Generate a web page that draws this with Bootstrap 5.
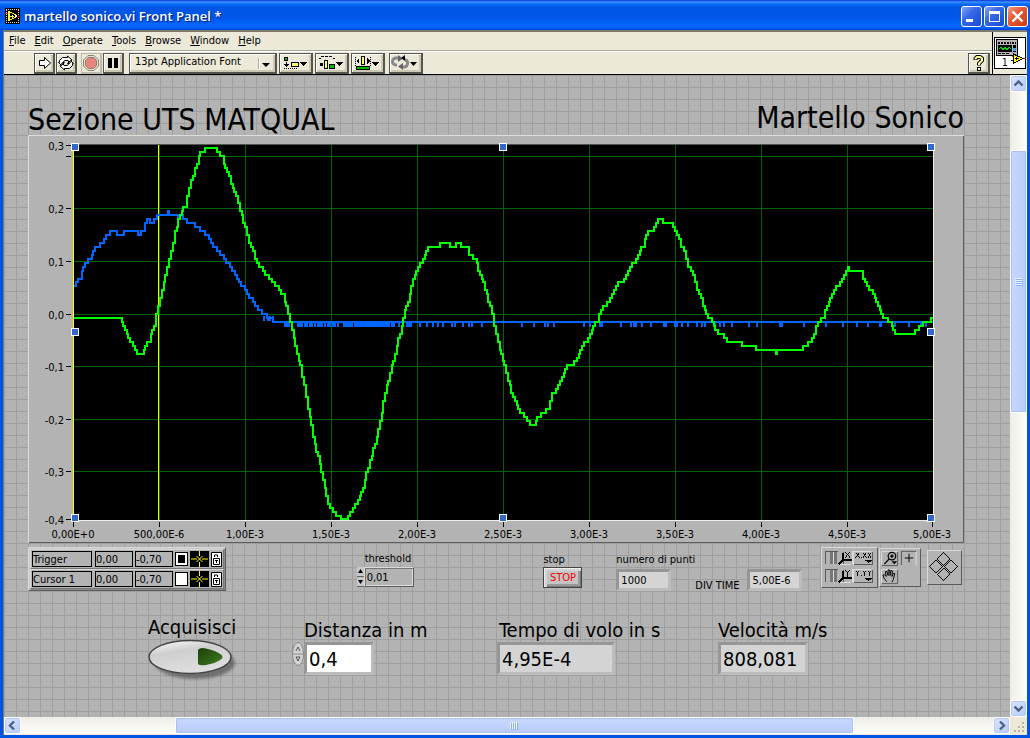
<!DOCTYPE html>
<html lang="it">
<head>
<meta charset="utf-8">
<meta name="viewport" content="width=device-width, initial-scale=1">
<title>martello sonico.vi Front Panel *</title>
<link href="https://cdn.jsdelivr.net/npm/bootstrap@5.3.0/dist/css/bootstrap.min.css" rel="stylesheet">
<style>
  :root { --panel: #b3b3b3; --face: #ece9d8; --blue: #0054e3; }
  body { font-family: "DejaVu Sans Condensed", "DejaVu Sans", sans-serif; font-size: 11px; line-height: 14px; color: #000; background: #0831d9; }
  input, button, select { font: inherit; color: inherit; border-radius: 0; }
  svg { display: block; flex: none; }
  .app-window { min-height: 100vh; padding: 0 3px; padding-bottom: 3px; background: var(--blue); }

  .title-strip { height: 30px; margin: 0 -3px; padding: 2px 0 0 5px; background: linear-gradient(#0831d9 0, #3a93ff 2px, #0a6af5 4px, #0055e5 8px, #0057e8 18px, #0066ff 25px, #0061f5 28px, #003dd7 30px); }
  .title-text { font: 600 13px/18px "Open Sans", sans-serif; color: #fff; text-shadow: 1px 1px 1px #0a1883; }
  .win-btn { width: 21px; height: 21px; padding: 0; border: 1px solid #fff; border-radius: 3px; background: linear-gradient(135deg, #86a6f0, #3668e6 40%, #1c4bd0); }
  .win-btn.close-btn { background: linear-gradient(135deg, #f0a088, #e35a36 40%, #c93a12); }

  .work { border: 1px solid #7c7a6c; border-width: 2px 0 0 1px; background: var(--face); }
  .menu-strip { height: 19px; gap: 9px; padding: 0 5px; border-bottom: 1px solid #aca899; }
  .menu-strip a { color: #000; text-decoration: none; line-height: 18px; }
  .tool-strip { height: 23px; padding: 1px 2px 0 30px; border-top: 1px solid #fff; }
  .tool-btn { height: 21px; width: 21px; padding: 0; border: 1px solid #55554d; border-right-width: 2px; border-bottom-width: 2px; background: var(--face); box-shadow: inset 1px 1px #fff, inset -2px -2px #cbc8b4; }
  .tool-btn.wide { width: 34px; }
  .tool-btn.off { border-color: #bdb9a8; box-shadow: none; }
  .font-wrap { width: 148px; }
  .font-wrap select { width: 100%; height: 21px; padding: 0 22px 2px 5px; appearance: none; border: 1px solid #55554d; border-width: 1px 2px 2px 1px; background: var(--face); box-shadow: inset 1px 1px #fff, inset -2px -2px #cbc8b4; }
  .font-wrap svg { position: absolute; right: 3px; top: 2px; pointer-events: none; }
  .vi-box { width: 35px; padding: 5px 0 0 1px; border-left: 1px solid #000; }
  .head-row { border-bottom: 1px solid #000; }

  .canvas-area { padding: 0 46px 0 24px; background: repeating-linear-gradient(90deg, #9f9f9f 0 1px, transparent 1px 12px), repeating-linear-gradient(#9f9f9f 0 1px, transparent 1px 12px), var(--panel); min-width: 0; }
  .big-title { font-size: 30px; line-height: 34px; padding-top: 26px; margin: 0; font-weight: 400; }
  h1.big-title { line-height: 30px; padding-top: 30px; }
  .chart-frame text { font-size: 11px; }

  .mid-row { display: grid; grid-template-columns: 329fr 187fr 73fr 78fr 126fr 143fr; margin-top: 4px; height: 44px; }
  .low-row { display: grid; grid-template-columns: 144fr 205fr 221fr 246fr; margin-top: 27px; padding-left: 120px; }
  .low-row label, .low-label { font-size: 20px; line-height: 24px; white-space: nowrap; }
  .raised { background: var(--panel); border: 1px solid; border-color: #d9d9d9 #5c5c5c #5c5c5c #d9d9d9; }
  .cursor-set { width: 198px; padding: 1px; box-shadow: inset 1px 1px #c8c8c8, inset -1px -1px #8a8a8a; }
  .cursor-line { height: 20px; gap: 2px; padding: 0 1px; border: 1px solid; border-color: #d9d9d9 #777 #777 #d9d9d9; }
  .cursor-line input { flex: none; }
  .cursor-line input[type=text] { height: 16px; width: 38px; padding: 0; border: 1px solid #000; background: var(--panel); }
  .cursor-line input[type=text].cur-name { width: 60px; margin-right: 1px; }
  .cursor-line input[type=checkbox] { appearance: none; width: 13px; height: 14px; margin: 0; border: 1px solid #000; background: #fff; }
  .cursor-line input[type=checkbox]:checked { background: #000; box-shadow: inset 0 0 0 2px #fff; }
  .field-thr { width: 50px; height: 20px; padding: 0 2px; border: 1px solid; border-color: #d9d9d9 #5c5c5c #5c5c5c #d9d9d9; background: var(--panel); box-shadow: inset 1px 1px #777, inset -1px -1px #ddd; }
  .stop-btn { width: 39px; height: 21px; padding: 0; color: #f00; border: 1px solid #444; background: #c4c4c4; box-shadow: inset 1px 1px #eee, inset 3px 3px #d4d4d4, inset -1px -1px #777, inset -3px -3px #999; }
  .sunk { border: 3px solid; border-color: #969696 #bcbcbc #bcbcbc #969696; background: #d4d4d4; padding: 0 2px; min-width: 0; }
  .sunk.small-f { width: 55px; height: 22px; }
  .sunk.large-f { height: 33px; font-size: 20px; }
  .sunk.editable { background: #fff; }
  .acq-btn { padding: 0; border: 0; background: none; }

  .v-bar { width: 17px; background: linear-gradient(90deg, #eeede5, #fefefb); }
  .h-bar { height: 17px; background: linear-gradient(#eeede5, #fefefb); }
  .sb-btn { width: 17px; height: 17px; padding: 0; flex: none; border: 1px solid #fff; border-radius: 3px; background: linear-gradient(135deg, #dce7ff, #b5cbfa); box-shadow: inset 0 0 0 1px #b4c8f3; }
  .sb-thumb { border: 1px solid #fff; border-radius: 2px; box-shadow: inset 0 0 0 1px #aac0f0; }
  .v-bar .sb-thumb { background: linear-gradient(90deg, #c9d8fd, #b8cdfb); }
  .h-bar .sb-thumb { background: linear-gradient(#c9d8fd, #b8cdfb); }
</style>
</head>
<body>
<div class="app-window d-flex flex-column">
  <header class="title-strip d-flex align-items-center">
    <svg width="15" height="16" viewBox="0 0 15 16" shape-rendering="crispEdges"><path d="M0 0h15v16H0z" fill="#000"/><path d="M1 1.500h13M1 14.500h13M1.500 2v12M13.500 2v12" stroke="#ddd" stroke-dasharray="1 1"/><path d="M3 3v10h2v-1h2v-1h2v-1h2V9h1V7h-1V6H9V5H7V4H5V3z" fill="#ffff50"/><path d="M5 5h2v1h2v1h1v2H9v1H7v1H5z"/><path d="M5 8.500h4M7.500 7v3" stroke="#ffff50"/><path d="M0 5.500h3M13 8.500h2" stroke="red"/></svg>
    <span class="title-text flex-grow-1 ms-1">martello sonico.vi Front Panel *</span>
    <div class="d-flex" style="gap:2px;padding-right:2px">
      <button class="win-btn" aria-label="Minimize"><svg width="19" height="19"><path d="M4 12h7v3H4z" fill="#fff"/></svg></button>
      <button class="win-btn" aria-label="Maximize"><svg width="19" height="19"><path d="M4 4h11v11H4zM5 7v7h9V7z" fill="#fff" fill-rule="evenodd"/></svg></button>
      <button class="win-btn close-btn" aria-label="Close"><svg width="19" height="19"><path d="M4.500 4.500l10 10m0-10l-10 10" stroke="#fff" stroke-width="2.400"/></svg></button>
    </div>
  </header>

  <div class="work d-flex flex-column flex-grow-1">
    <div class="head-row d-flex">
      <div class="flex-grow-1">
        <nav class="menu-strip d-flex">
          <a href="#"><u>F</u>ile</a><a href="#"><u>E</u>dit</a><a href="#"><u>O</u>perate</a><a href="#"><u>T</u>ools</a><a href="#"><u>B</u>rowse</a><a href="#"><u>W</u>indow</a><a href="#"><u>H</u>elp</a>
        </nav>
        <div class="tool-strip d-flex">
          <button class="tool-btn" aria-label="Run"><svg width="18" height="18"><path d="M4.500 6.500h5v-3l6 5.500-6 5.500v-3h-5z" fill="#fff" stroke="#000"/></svg></button>
          <button class="tool-btn" style="margin-left:1px" aria-label="Run continuously"><svg width="18" height="18"><path d="M2.500 6.500l3-3h5V2l4.500 4-2.500 3.500L11 6.500H7.500L6 8.500h1.500l-3 3-3-3h1zM15.500 11.500l-3 3h-5V16L3 12l2.500-3.500L7 11.500h3.500L12 9.500h-1.500l3-3 3 3h-1z" fill="#fff" stroke="#000"/></svg></button>
          <button class="tool-btn off ms-1" aria-label="Abort"><svg width="18" height="18"><path d="M6 1.500h6L16.500 6v6L12 16.500H6L1.500 12V6z" fill="#e4e0d0" stroke="#858278"/><path d="M6.500 3.500h5l3 3v5l-3 3h-5l-3-3v-5z" fill="#e6857c" stroke="#98766e"/></svg></button>
          <button class="tool-btn" style="margin-left:1px" aria-label="Pause"><svg width="18" height="18"><path d="M4 4h4v10H4zM10 4h4v10h-4z"/></svg></button>
          <div class="font-wrap position-relative" style="margin-left:5px">
            <select aria-label="Font"><option>13pt Application Font</option></select>
            <svg width="16" height="17"><path d="M.5 3v11" stroke="#aaa"/><path d="M1.500 3v11" stroke="#fff"/><path d="M4 8h8l-4 4z"/></svg>
          </div>
          <button class="tool-btn wide" style="margin-left:2px" aria-label="Align objects"><svg width="31" height="18" shape-rendering="crispEdges"><path d="M4.500 3.500h3v3h-3z" fill="#0b0" stroke="#000"/><path d="M6 8v2" stroke="#000"/><path d="M4 10h5l-2.500 3z"/><path d="M4 14.500h14" stroke="#000" stroke-dasharray="1 1"/><path d="M11.500 8.500h7v4h-7z" fill="#ffff60" stroke="#000"/><path d="M20 8h7l-3.500 4z"/></svg></button>
          <button class="tool-btn wide" style="margin-left:2px" aria-label="Distribute objects"><svg width="31" height="18" shape-rendering="crispEdges"><path d="M3 4.500h2M5 2.500h12M17 4.500h2" fill="none" stroke="#000" stroke-dasharray="3 1"/><path d="M4 9h3v3H4z"/><path d="M8.500 6.500h3v8h-3z" fill="#ffff60" stroke="#000"/><path d="M13.500 10.500h5v4h-5z" fill="#0b0" stroke="#000"/><path d="M20 8h7l-3.500 4z"/></svg></button>
          <button class="tool-btn wide" style="margin-left:2px" aria-label="Resize objects"><svg width="31" height="18" shape-rendering="crispEdges"><path d="M3.500 3v9M18.500 3v9" stroke="#000" stroke-dasharray="1 1"/><path d="M4 7l3-3v6zM18 7l-3-3v6z"/><path d="M9.500 2.500h3v8h-3z" fill="#ffff60" stroke="#000"/><path d="M4.500 12.500h13v3h-13z" fill="#0b0" stroke="#000"/><path d="M20 8h7l-3.500 4z"/></svg></button>
          <button class="tool-btn wide" style="margin-left:4px" aria-label="Reorder"><svg width="31" height="18"><path d="M9 4H6a3 3 0 0 0 0 7h1M13 13h2a4 4 0 0 0 1-7h-1" fill="none" stroke="#888" stroke-width="3"/><path d="M8 1l5 3.500L8 8zM13 9l-5 3.500 5 3.500z" fill="#666"/><path d="M15 1l-4 3 4 3z"/><path d="M20 8h7l-3.500 4z"/></svg></button>
          <button class="tool-btn ms-auto" style="width:22px" aria-label="Help"><svg width="19" height="18"><path d="M6.500 6V4.500L8 3h3l2 1.500v2L10 9.500v2" fill="none" stroke="#000" stroke-width="4"/><path d="M8 13h4v4H8z"/><path d="M6.500 5.500v-1L8 3h3l2 1.500v2L10 9.500V11" fill="none" stroke="#ffff9a" stroke-width="2"/><path d="M9 14h2v2H9z" fill="#ffff9a"/></svg></button>
        </div>
      </div>
      <div class="vi-box"><svg width="32" height="32" viewBox="0 0 32 32" shape-rendering="crispEdges"><path d="M.5.500h31v31H.5z" fill="#fff" stroke="#000"/><path d="M2.500 2.500h21v16h-21z" fill="#b5b5b5" stroke="#000"/><path d="M4 6h13M18 6h4" stroke="#000" stroke-width="2" stroke-dasharray="2 1"/><path d="M4 8h14v7H4zM19 8h3v7h-3z"/><path d="M5 12l2-2 2 3 2-3 2 3 2-3 2 2" fill="none" stroke="#0d0"/><path d="M19 11h3v3h-3z" fill="#49f"/><path d="M4 16.500h12" stroke="#000" stroke-dasharray="3 1"/><path d="M17 23.500h3" stroke="#00f"/><path d="M18 19.500h3M28 21.500h4" stroke="red"/><path d="M19 16v11l11-5.500z"/><path d="M20 18v7.500l8-4z" fill="#ffff20"/><path d="M21 21.500h4M22.500 20v3" stroke="#000"/><text x="8" y="29" font-size="10">1</text></svg></div>
    </div>

    <div class="d-flex flex-grow-1">
      <main class="canvas-area flex-grow-1">
        <div class="d-flex justify-content-between">
          <h1 class="big-title">Sezione UTS MATQUAL</h1>
          <h2 class="big-title">Martello Sonico</h2>
        </div>

        <svg class="chart-frame w-100" viewBox="28 135 936 408" role="img" aria-label="Grafico del segnale">
          <path d="M28 135h936v408H28z" fill="#b3b3b3"/>
          <path d="M28.500 543V135.500H964" fill="none" stroke="#dcdcdc"/>
          <path d="M963.500 136v406.500H29" fill="none" stroke="#5c5c5c"/>
          <path d="M73 144h860v376H73z"/>
          <path d="M73 144.500h860" stroke="#555"/>
          <path d="M933.500 145v375.500H74" fill="none" stroke="#ececec"/>
          <g id="gridLines" stroke="#006400"></g>
          <g id="axisMarks"></g>
          <path d="M73.500 145v375M158.500 145v375" stroke="#ff0"/>
          <path id="blueTrace" fill="none" stroke="#06f" stroke-width="2"/>
          <path id="blueDips" fill="none" stroke="#06f" stroke-width="2"/>
          <path id="greenTrace" fill="none" stroke="#0f0" stroke-width="2"/>
          <g id="handles" fill="#316ac5" stroke="#fff"></g>
        </svg>

        <div class="mid-row">
          <div>
            <div class="raised cursor-set">
              <div class="cursor-line d-flex align-items-center">
                <input type="text" class="cur-name" aria-label="Cursor name" value="Trigger"><input type="text" aria-label="X" value="0,00"><input type="text" aria-label="Y" value="-0,70"><input type="checkbox" aria-label="Active" checked>
                <svg width="19" height="16"><path d="M0 0h19v16H0z"/><path d="M1 8h6m5 0h6M9.500 0v5m0 6v5M6.500 5l6 6m0-6l-6 6" stroke="#ff0"/></svg>
                <svg width="11" height="15"><path d="M.5.500h10v14H.5z" fill="#fff" stroke="#000"/><path d="M3.500 5V3h3v2M2.500 6.500h6v6h-6zM4 8.500h3M5.500 8v3" fill="none" stroke="#000"/></svg>
              </div>
              <div class="cursor-line d-flex align-items-center">
                <input type="text" class="cur-name" aria-label="Cursor name" value="Cursor 1"><input type="text" aria-label="X" value="0,00"><input type="text" aria-label="Y" value="-0,70"><input type="checkbox" aria-label="Active">
                <svg width="19" height="16"><path d="M0 0h19v16H0z"/><path d="M1 8h6m5 0h6M9.500 0v5m0 6v5M6.500 5l6 6m0-6l-6 6" stroke="#ff0"/></svg>
                <svg width="11" height="15"><path d="M.5.500h10v14H.5z" fill="#fff" stroke="#000"/><path d="M3.500 5V3h3v2M2.500 6.500h6v6h-6zM4 8.500h3M5.500 8v3" fill="none" stroke="#000"/></svg>
              </div>
            </div>
          </div>
          <div style="padding-top:5px">
            <label for="thr" class="d-block ms-2">threshold</label>
            <div class="d-flex" style="margin-top:1px">
              <svg width="7" height="20"><path d="M0 0h7v9.500H0zM0 10.500h7V20H0z" fill="#c8c8c8"/><path d="M0 9.500h7M0 19.500h7" stroke="#666"/><path d="M1 6l2.500-4L6 6zM1 13l2.500 4L6 13z"/></svg>
              <input id="thr" type="text" class="field-thr" value="0,01">
            </div>
          </div>
          <div style="padding-top:6px">
            <label for="stp" class="d-block">stop</label>
            <button id="stp" class="stop-btn">STOP</button>
          </div>
          <div style="padding-top:6px">
            <label for="pts" class="d-block text-nowrap">numero di punti</label>
            <input id="pts" type="text" readonly class="sunk small-f d-block" style="margin-top:2px" value="1000">
          </div>
          <div class="d-flex" style="padding-top:22px;gap:8px">
            <label for="dvt" class="text-nowrap" style="padding-top:10px">DIV TIME</label>
            <input id="dvt" type="text" readonly class="sunk small-f" value="5,00E-6">
          </div>
          <div class="d-flex align-items-start">
            <svg width="57" height="41" class="raised" viewBox="0 0 57 41" shape-rendering="crispEdges">
              <g id="scaleRow"><path d="M3.500 17V3.500h13M22.500 4v13.500" fill="none" stroke="#555"/><path d="M8 4h3v13H8zM12 4h3v13h-3z" fill="#777"/><path d="M11.500 4v13" stroke="#ddd"/><path d="M30.500 17.500H17M31.500 3v14M33 17.500V3.500h18" fill="none" stroke="#ddd"/><path d="M52.500 4v13.500H33" fill="none" stroke="#555"/><path d="M21.500 5v8h10M21 13l-4 4" stroke="#000" fill="none" stroke-width="2"/><path d="M45 13h7l-3.500 3z"/></g>
              <use href="#scaleRow" y="19"/>
              <path d="M24 4l5 6m0-6l-5 6M35 5l4 5m0-5l-4 5M43 5l3 5m0-5l-3 5M48 5l3 5m0-5l-3 5M41 9.500h1M24 23l2.500 3 2.500-3M26.500 26v4M35 24l2 2 2-2M37 26v3M43 24l1.500 2 1.500-2M44.500 26v3M48 24l1.500 2 1.500-2M49.500 26v3M41 28.500h1" fill="none" stroke="#000"/>
            </svg>
            <svg width="42" height="39" class="raised" viewBox="0 0 42 39" style="margin:1px 0 0 1px">
              <path d="M1.500 17V2.500h17M1.500 36V21.500h17M38 17.500V3" fill="none" stroke="#ddd"/><path d="M18.500 3v14.500H2M18.500 22v14.500H2M22.500 17V2.500H38" fill="none" stroke="#555"/>
              <circle cx="12.500" cy="7.500" r="4" fill="none" stroke="#000" stroke-width="1.300"/><path d="M10.500 7.500h4m-2-2v4M9.500 10.500l-5 5.500" stroke="#000" stroke-width="1.300"/><path d="M12 13h6l-3 3z"/>
              <path d="M30.500 5v9M26 9.500h9" stroke="#000"/>
              <path d="M7 34.500l-3-4-1-3 1.500-.5 2 2-1-5 1.500-.5 1.500 4.500v-6h1.500l.5 6 1-5.500 1.500.5-.5 6 1.500-3.500 1.500.5-1.500 6-1.500 3" fill="none" stroke="#000"/>
            </svg>
            <svg width="35" height="35" class="raised" viewBox="0 0 35 35" style="margin:3px 0 0 6px" shape-rendering="crispEdges"><path d="M16.500 1.500l7 7-7 7-7-7zM8.500 9.500l7 7-7 7-7-7zM24.500 9.500l7 7-7 7-7-7zM16.500 17.500l7 7-7 7-7-7z" fill="none" stroke="#000"/></svg>
          </div>
        </div>

        <div class="low-row">
          <div style="margin-top:-3px">
            <span class="low-label d-block" id="acqLabel">Acquisisci</span>
            <button class="acq-btn" aria-labelledby="acqLabel">
              <svg width="90" height="44" viewBox="0 0 90 44">
                <defs>
                  <linearGradient id="btnFace" x1="0" y1="0" x2=".4" y2="1"><stop offset="0" stop-color="#fff"/><stop offset=".4" stop-color="#cfcfcf"/><stop offset="1" stop-color="#dedede"/></linearGradient>
                  <linearGradient id="ledFace" x1="0" y1="0" x2="1" y2="1"><stop offset="0" stop-color="#1c3f08"/><stop offset="1" stop-color="#3f7d22"/></linearGradient>
                  <filter id="softShade"><feGaussianBlur stdDeviation="1.500"/></filter>
                </defs>
                <ellipse cx="47" cy="24" rx="40" ry="16" fill="#555" opacity=".7" filter="url(#softShade)"/>
                <ellipse cx="42" cy="18" rx="41" ry="16.500" fill="url(#btnFace)" stroke="#444" stroke-width="1.500"/>
                <path d="M50 11q2-3 8-1.500q10 2 15 6q3 2.500 0 5q-6 4-15 5.500q-6 1-8-1z" fill="url(#ledFace)"/>
              </svg>
            </button>
          </div>
          <div>
            <label for="dist" class="d-block" style="margin-left:12px">Distanza in m</label>
            <div class="d-flex">
              <svg width="12" height="24" viewBox="0 0 12 24"><ellipse cx="6" cy="12" rx="5.500" ry="11.500" fill="#d2d2d2" stroke="#888"/><path d="M1 12h10" stroke="#888"/><path d="M4 9l2-4 2 4M4 15l2 4 2-4z" fill="none" stroke="#555"/></svg>
              <input id="dist" type="text" class="sunk large-f editable" style="width:70px" value="0,4">
            </div>
          </div>
          <div>
            <label for="tof" class="d-block" style="margin-left:2px">Tempo di volo in s</label>
            <input id="tof" type="text" readonly class="sunk large-f d-block" style="width:118px" value="4,95E-4">
          </div>
          <div>
            <label for="vel" class="d-block">Velocità m/s</label>
            <input id="vel" type="text" readonly class="sunk large-f d-block" style="width:90px" value="808,081">
          </div>
        </div>
      </main>
      <div class="v-bar d-flex flex-column">
        <button class="sb-btn" aria-label="Scroll up"><svg width="15" height="15"><path d="M3.500 9.500l4-4 4 4" fill="none" stroke="#4d6185" stroke-width="2.400"/></svg></button>
        <div style="flex:58"></div>
        <div class="sb-thumb d-flex align-items-center justify-content-center" style="flex:263"><svg width="8" height="8"><path d="M0 .5h7M0 2.500h7M0 4.500h7M0 6.500h7" stroke="#eef4fe"/><path d="M1 1.500h7M1 3.500h7M1 5.500h7M1 7.500h7" stroke="#8cb0f8"/></svg></div>
        <div style="flex:288"></div>
        <button class="sb-btn" aria-label="Scroll down"><svg width="15" height="15"><path d="M3.500 5.500l4 4 4-4" fill="none" stroke="#4d6185" stroke-width="2.400"/></svg></button>
      </div>
    </div>
    <div class="d-flex">
      <div class="h-bar d-flex flex-grow-1">
        <button class="sb-btn" aria-label="Scroll left"><svg width="15" height="15"><path d="M9 3.500l-4 4 4 4" fill="none" stroke="#4d6185" stroke-width="2.400"/></svg></button>
        <div style="flex:154"></div>
        <div class="sb-thumb d-flex align-items-center justify-content-center" style="flex:679"><svg width="8" height="8"><path d="M.5 0v7M2.500 0v7M4.500 0v7M6.500 0v7" stroke="#eef4fe"/><path d="M1.500 1v7M3.500 1v7M5.500 1v7M7.500 1v7" stroke="#8cb0f8"/></svg></div>
        <div style="flex:139"></div>
        <button class="sb-btn" aria-label="Scroll right"><svg width="15" height="15"><path d="M6 3.500l4 4-4 4" fill="none" stroke="#4d6185" stroke-width="2.400"/></svg></button>
      </div>
      <svg width="17" height="17"><path d="M12 5h2v2h-2zM8 9h2v2H8zM12 9h2v2h-2zM4 13h2v2H4zM8 13h2v2H8zM12 13h2v2h-2z" fill="#b8b4a2"/></svg>
    </div>
    <div style="height:1px"></div>
  </div>
</div>

<script src="https://cdn.jsdelivr.net/npm/bootstrap@5.3.0/dist/js/bootstrap.bundle.min.js"></script>
<script>
  // Signals, as x,y pairs in plot units
  const green = [74,318,120,318,125,328,130,340,135,349,139,355,142,354,145,346,149,340,154,325,158,306,162,291,167,268,171,252,175,233,180,215,185,206,189,188,193,174,197,162,200,154,205,150,211,147,214,147,217,152,222,158,227,170,231,184,236,196,240,211,243,222,247,236,253,252,257,262,265,275,272,281,277,288,283,295,288,313,292,328,297,353,300,366,304,386,308,408,313,435,318,458,323,481,328,503,333,511,338,515,343,519,346,519,350,513,353,507,358,500,363,487,368,467,375,443,380,420,385,393,390,375,395,352,400,333,403,317,408,302,413,278,418,267,423,260,428,248,439,248,440,244,449,244,450,248,455,248,456,244,460,244,461,248,467,248,469,255,475,260,480,273,485,290,490,307,494,325,498,343,501,355,506,372,508,380,513,397,520,412,527,420,530,424,534,424,537,417,543,413,548,407,552,395,560,382,567,367,572,365,577,357,582,347,588,337,597,320,603,307,610,298,616,285,622,283,630,265,636,260,643,245,648,232,652,230,658,219,661,219,663,223,671,223,675,230,681,245,684,250,688,265,693,275,697,292,701,297,703,308,708,317,712,320,715,328,720,334,724,337,729,342,740,343,743,346,755,346,756,350,775,350,776,355,777,350,799,350,805,346,810,340,814,332,818,323,823,317,827,307,832,293,838,286,844,273,848,268,849,272,854,269,855,272,861,272,867,287,873,293,878,307,883,317,888,320,895,333,912,334,917,328,923,323,928,321,933,318];
  const blue = [74,285,80,277,85,262,90,259,95,248,102,242,110,231,116,231,117,235,122,235,124,231,137,231,138,235,143,230,147,220,152,222,157,215,167,215,168,212,169,215,173,215,178,218,181,216,185,221,191,223,200,230,207,235,213,245,222,255,230,267,237,277,245,292,253,302,262,313,267,317,275,322,283,322,933,322];
  const dips = [264,268,270,273,285,287,289,292,298,300,302,305,307,310,312,315,318,320,322,325,328,330,333,335,338,344,346,348,350,352,355,357,359,361,363,365,367,369,371,373,375,377,379,381,383,385,387,389,392,394,399,407,409,411,420,427,433,438,443,452,455,463,469,472,482,522,534,545,548,554,584,590,600,602,621,631,634,636,642,651,664,666,675,677,682,688,697,702,705,715,720,724,732,749,757,780,782,804,826,843,857,868,880,881,895,909,921,926];

  // The converter has discrete levels, so a trace climbs in steps
  function stepped(pts, step) {
    const level = y => Math.round(318 + Math.round((y - 318) / step) * step);
    let d = `M${pts[0]} ${level(pts[1])}`;
    for (let i = 2; i < pts.length; i += 2) {
      const x0 = pts[i - 2], y0 = pts[i - 1], x1 = pts[i], y1 = pts[i + 1];
      const n = Math.max(1, Math.round((x1 - x0) / 2));
      for (let k = 1; k <= n; k++) d += `H${Math.round(x0 + (x1 - x0) * k / n)}V${level(y0 + (y1 - y0) * k / n)}`;
    }
    return d;
  }
  const byId = id => document.getElementById(id);
  byId('greenTrace').setAttribute('d', stepped(green, 3.95));
  byId('blueTrace').setAttribute('d', stepped(blue, 3.95));
  byId('blueDips').setAttribute('d', dips.map(x => `M${x} ${x < 275 ? 316 : 322}v5`).join(''));

  const rows = [[208, '0,2'], [261, '0,1'], [314, '0,0'], [366, '-0,1'], [419, '-0,2'], [471, '-0,3']];
  const cols = ['0,00E+0', '500,00E-6', '1,00E-3', '1,50E-3', '2,00E-3', '2,50E-3', '3,00E-3', '3,50E-3', '4,00E-3', '4,50E-3', '5,00E-3'];
  let grid = '', marks = '';
  [156, ...rows.map(r => r[0])].forEach(y => grid += `<path d="M74 ${y}.5h859"/>`);
  [[145, '0,3'], [156, ''], ...rows, [519, '-0,4']].forEach(([y, t]) => {
    marks += `<path d="M66 ${y}.5h5" stroke="#000"/><text x="64" y="${y + 5}" text-anchor="end">${t}</text>`;
  });
  cols.forEach((t, i) => {
    const x = i === 10 ? 932 : 73 + i * 86;
    if (i && i < 10) grid += `<path d="M${x}.5 145v375"/>`;
    marks += `<path d="M${x}.5 522v5" stroke="#000"/><text x="${x}" y="538" text-anchor="middle">${t}</text>`;
  });
  byId('gridLines').innerHTML = grid;
  byId('axisMarks').innerHTML = marks;
  byId('handles').innerHTML = [[75, 147], [503, 147], [931, 147], [75, 332], [931, 332], [75, 518], [503, 518], [931, 518]]
    .map(([x, y]) => `<rect x="${x - 3.5}" y="${y - 3.5}" width="7" height="7"/>`).join('');
</script>
</body>
</html>
